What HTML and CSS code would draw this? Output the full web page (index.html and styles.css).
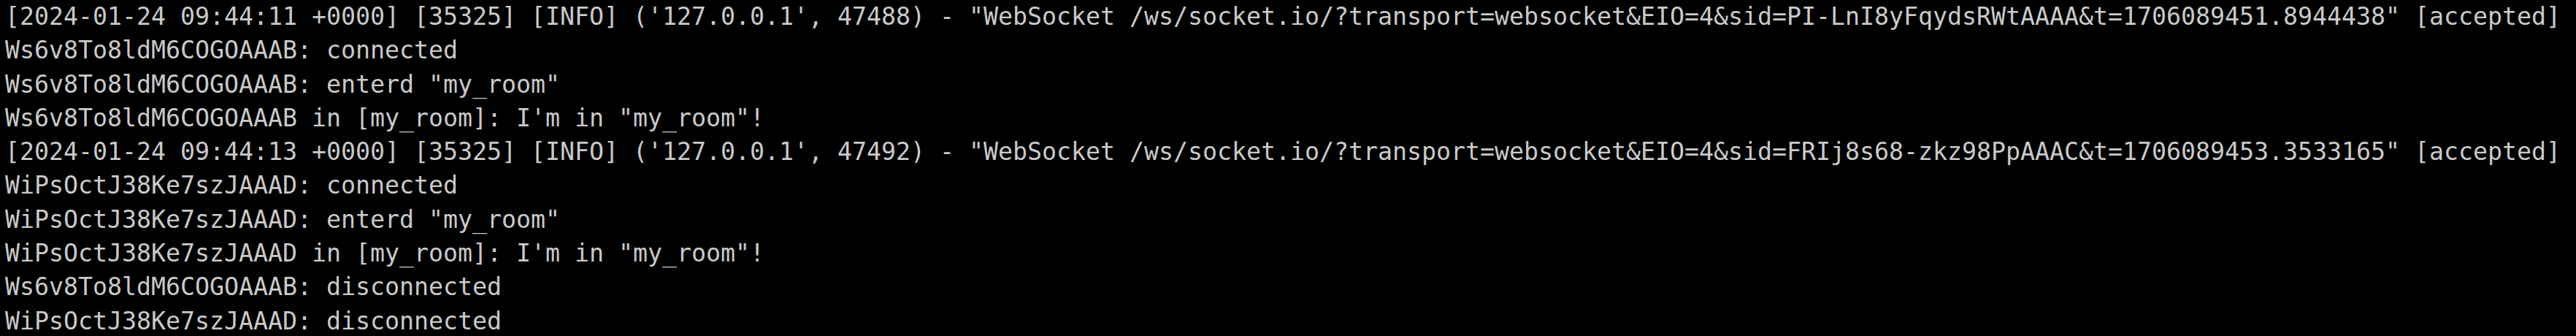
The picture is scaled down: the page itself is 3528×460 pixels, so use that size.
FILE: index.html
```html
<!DOCTYPE html>
<html lang="en">
<head>
<meta charset="utf-8">
<title>Terminal</title>
<link rel="stylesheet" href="styles.css">
</head>
<body>
<main class="terminal">
<pre class="log">[2024-01-24 09:44:11 +0000] [35325] [INFO] ('127.0.0.1', 47488) - "WebSocket /ws/socket.io/?transport=websocket&amp;EIO=4&amp;sid=PI-LnI8yFqydsRWtAAAA&amp;t=1706089451.8944438" [accepted]
Ws6v8To8ldM6COGOAAAB: connected
Ws6v8To8ldM6COGOAAAB: enterd "my_room"
Ws6v8To8ldM6COGOAAAB in [my_room]: I'm in "my_room"!
[2024-01-24 09:44:13 +0000] [35325] [INFO] ('127.0.0.1', 47492) - "WebSocket /ws/socket.io/?transport=websocket&amp;EIO=4&amp;sid=FRIj8s68-zkz98PpAAAC&amp;t=1706089453.3533165" [accepted]
WiPsOctJ38Ke7szJAAAD: connected
WiPsOctJ38Ke7szJAAAD: enterd "my_room"
WiPsOctJ38Ke7szJAAAD in [my_room]: I'm in "my_room"!
Ws6v8To8ldM6COGOAAAB: disconnected
WiPsOctJ38Ke7szJAAAD: disconnected</pre>
</main>
</body>
</html>
```

FILE: styles.css
```css
html, body {
  margin: 0;
  padding: 0;
  background: #000;
}

.terminal {
  width: 3528px;
  height: 460px;
  overflow: hidden;
  background: #000;
  padding: 0 0 0 7px;
  box-sizing: border-box;
}

.log {
  margin: 0;
  font-family: "DejaVu Sans Mono", "Liberation Mono", monospace;
  font-size: 33.22px;
  line-height: 46.3px;
  color: #c9c9c9;
  white-space: pre;
}
```
